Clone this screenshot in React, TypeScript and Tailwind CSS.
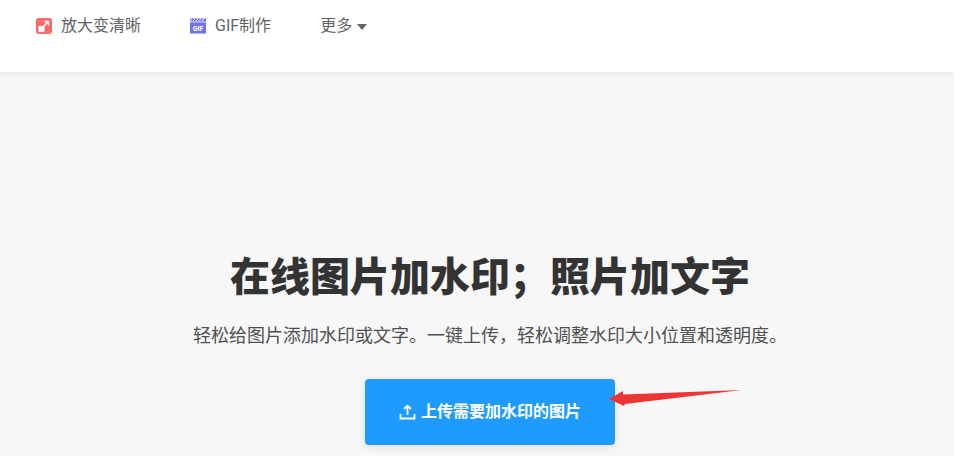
const cjk = "font-['Roboto','Noto_Sans_CJK_SC',sans-serif]";

function ZoomIcon() {
  return (
    <svg width="16" height="16" viewBox="0 0 16 16">
      <rect width="16" height="16" rx="2.5" fill="#f76d6d" />
      <rect x="2.5" y="8" width="6" height="6" rx="1" fill="#fff" />
      <path d="M7.5 8.5 L12 4 M8.5 3.5 H12.5 V7.5" stroke="#fff" strokeWidth="1.4" fill="none" />
    </svg>
  );
}

function GifIcon() {
  return (
    <svg width="16" height="16" viewBox="0 0 16 16">
      <rect y="0.5" width="16" height="15" fill="#6f72ea" />
      <path d="M0 3 L2 1 M3 3 L5 1 M6 3 L8 1 M9 3 L11 1 M12 3 L14 1" stroke="#fff" strokeWidth="0.9" />
      <rect y="3.6" width="16" height="0.8" fill="#fff" />
      <text x="8" y="12.5" textAnchor="middle" fontSize="7" fontWeight="700" fill="#fff" fontFamily="Roboto, sans-serif">GIF</text>
    </svg>
  );
}

function UploadIcon() {
  return (
    <svg width="17" height="16" viewBox="0 0 17 16" fill="none" stroke="#fff" strokeWidth="1.8">
      <path d="M8.5 11 V2 M5 5 L8.5 1.8 L12 5" />
      <path d="M1.5 10 V14.5 H15.5 V10" />
    </svg>
  );
}

export default function App() {
  return (
    <div className={`relative h-[456px] w-[954px] overflow-hidden bg-[#f7f7f8] ${cjk}`}>
      <header className="flex h-[72px] items-start gap-[49px] bg-white pl-[36px] pt-[16px] text-[16px] leading-[20px] text-[#5f6368] shadow-[0_1px_6px_rgba(0,0,0,0.08)]">
        <a className="flex items-center gap-[9px]">
          <ZoomIcon />
          放大变清晰
        </a>
        <a className="flex items-center gap-[9px]">
          <GifIcon />
          GIF制作
        </a>
        <a className="flex items-center gap-[4px]">
          更多
          <span className="ml-[1px] mt-[1px] h-0 w-0 border-x-[5px] border-t-[6px] border-x-transparent border-t-[#5f6368]" />
        </a>
      </header>

      <main className="flex flex-col items-center pl-[26px] pt-[181px]">
        <h1 className="text-[40px] font-black leading-[50px] text-[#333]">在线图片加水印；照片加文字</h1>
        <p className="mt-[20px] text-[18px] leading-[26px] text-[#505050]">
          轻松给图片添加水印或文字。一键上传，轻松调整水印大小位置和透明度。
        </p>
        <button className="mt-[30px] flex h-[66px] w-[250px] items-center justify-center gap-[5px] rounded-[4px] bg-[#1f9bff] text-[16px] font-bold text-white shadow-[0_2px_8px_rgba(0,0,0,0.1)]">
          <UploadIcon />
          上传需要加水印的图片
        </button>
      </main>

      {/* red annotation arrow over the page */}
      <svg className="absolute left-[605px] top-[385px]" width="140" height="26" viewBox="0 0 140 26">
        <path d="M4 14 L18 6 L18 9.5 L137 5 L20 19 L19 21 Z" fill="#ee3535" />
      </svg>
    </div>
  );
}
